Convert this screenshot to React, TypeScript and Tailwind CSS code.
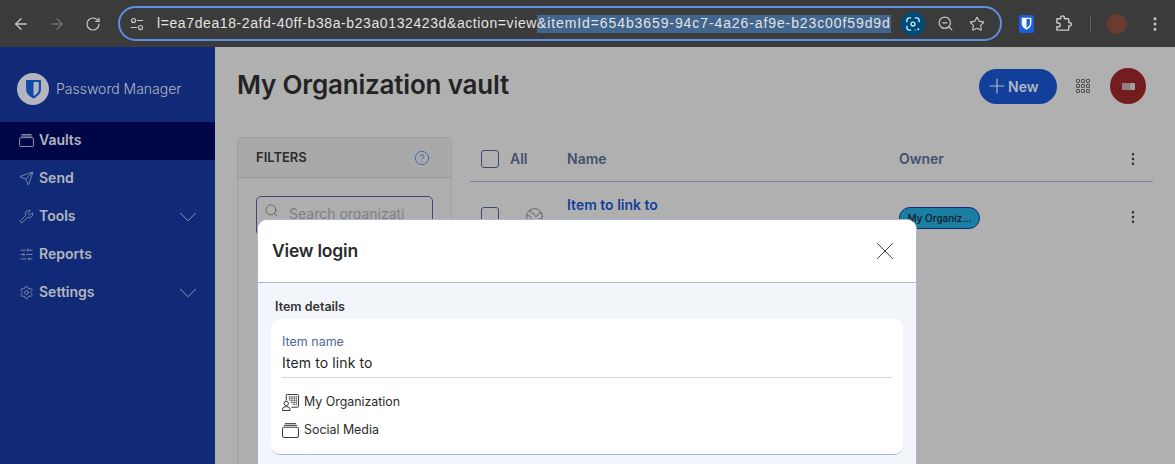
import React from "react";
import { ArrowLeft, ArrowRight, RotateCw, Search, Star, MoreVertical, Send, Wrench, SlidersHorizontal, Settings, ChevronDown, Plus, X, CircleHelp, Earth, ZoomOut } from "lucide-react";

const font = { fontFamily: "Inter, sans-serif" };

function Cards({ className = "" }: { className?: string }) {
  return (
    <svg viewBox="0 0 18 16" className={className} fill="none" stroke="currentColor" strokeWidth="1">
      <rect x="0.5" y="4.5" width="17" height="11" rx="1.5" />
      <path d="M2 2.5h14M3 0.7h12" />
    </svg>
  );
}

function Org({ className = "" }: { className?: string }) {
  return (
    <svg viewBox="0 0 18 18" className={className} fill="none" stroke="currentColor" strokeWidth="1">
      <path d="M4.5 7V1.500a1 1 0 0 1 1-1h11a1 1 0 0 1 1 1V13a1 1 0 0 1-1 1H10" />
      <path d="M7 3h9M7 5h9M8 7h8M9 9h7M11 11h5M8 2v5M10.500 2v8M13 2v10M15.500 2v10" strokeWidth="0.5" />
      <circle cx="4.500" cy="10" r="2.300" />
      <path d="M0.500 17.500v-1.500a3 3 0 0 1 3-2.500h2a3 3 0 0 1 3 2.500v1.500z" />
    </svg>
  );
}

function Shield({ className = "", fill = "currentColor", inner }: { className?: string; fill?: string; inner: string }) {
  return (
    <svg viewBox="0 0 16 18" className={className}>
      <path fill={fill} d="M1 0.500h14v9c0 3.800-3.300 6.500-7 8.500-3.700-2-7-4.700-7-8.500z" />
      <path fill={inner} d="M8 2.500h5v7c0 2.600-2.400 4.600-5 6z" />
    </svg>
  );
}

function Tune({ className = "" }: { className?: string }) {
  return (
    <svg viewBox="0 0 16 16" className={className} fill="none" stroke="currentColor" strokeWidth="1.4">
      <circle cx="4" cy="4" r="2.300" />
      <path d="M8 4h7M1 12h7" />
      <circle cx="12" cy="12" r="2.300" />
    </svg>
  );
}

function Lens({ className = "" }: { className?: string }) {
  return (
    <svg viewBox="0 0 16 16" className={className} fill="none" stroke="#c2e7ff" strokeWidth="1.600">
      <path d="M1 6V4a3 3 0 0 1 3-3h2M10 1h2a3 3 0 0 1 3 3v2M15 10v0M6 15H4a3 3 0 0 1-3-3v-2M10 15h1" />
      <circle cx="8" cy="8" r="2.200" />
      <circle cx="14" cy="14" r="1.200" fill="#c2e7ff" stroke="none" />
    </svg>
  );
}

function Ext({ className = "" }: { className?: string }) {
  return (
    <svg viewBox="0 0 18 18" className={className} fill="none" stroke="currentColor" strokeWidth="1.500" strokeLinejoin="round">
      <path d="M2 4h4V3a2 2 0 0 1 4 0v1h4.500v4H15.500a1.800 1.800 0 0 1 0 3.600H14.500V16H2v-3.500h1.500a2 2 0 0 0 0-4H2z" />
    </svg>
  );
}

function NavItem({ icon, label, active, chevron }: { icon: React.ReactNode; label: string; active?: boolean; chevron?: boolean }) {
  return (
    <div className={`flex h-[38px] items-center pl-[19px] pr-[12px] text-[#b3b6bf] ${active ? "bg-[#000647]" : ""}`}>
      <span className="flex w-[20px] justify-start pb-[2px]">{icon}</span>
      <span className="pb-[3px] text-[14px] font-semibold">{label}</span>
      {chevron && <ChevronDown className="ml-auto h-[30px] w-[30px] text-[#8d96b5]" strokeWidth={0.8} />}
    </div>
  );
}

export default function App() {
  return (
    <div className="flex h-[464px] w-[1175px] flex-col overflow-hidden bg-[#b0b0b0]" style={font}>
      <header className="flex h-[47px] shrink-0 items-center bg-[#3b3b3b] text-[#c7c7c7]">
        <div className="flex w-[118px] items-center">
          <ArrowLeft className="ml-[12px] h-[18px] w-[18px]" strokeWidth={1.7} />
          <ArrowRight className="ml-[18px] h-[18px] w-[18px] text-[#6f6f6f]" strokeWidth={1.7} />
          <RotateCw className="ml-[19px] h-[16px] w-[16px]" strokeWidth={1.8} />
        </div>
        <div className="flex h-[35px] w-[884px] items-center rounded-full border-2 border-[#5b90e3] pl-[10px] pr-[14px]">
          <Tune className="h-[14px] w-[14px]" />
          <div className="ml-[13px] flex h-[18px] items-center whitespace-nowrap text-[14px] text-[#e3e3e3]" style={{ fontFamily: '"Liberation Sans", sans-serif' }}>
            <span className="tracking-[0.6px]">l=ea7dea18-2afd-40ff-b38a-b23a0132423d&amp;action=view</span>
            <span className="flex h-[18px] items-center bg-[#41658c] tracking-[0.9px]">&amp;itemId=654b3659-94c7-4a26-af9e-b23c00f59d9d</span>
          </div>
          <div className="ml-[10px] flex h-[24px] w-[24px] shrink-0 items-center justify-center rounded-full bg-[#004a77]">
            <Lens className="h-[14px] w-[14px]" />
          </div>
          <ZoomOut className="ml-[12px] h-[17px] w-[17px] shrink-0" strokeWidth={1.7} />
          <Star className="ml-[15px] h-[16px] w-[16px] shrink-0" strokeWidth={1.7} />
        </div>
        <div className="ml-[17px] flex h-[18px] w-[15px] items-center justify-center rounded-[2px] bg-[#1a5fd9]">
          <Shield className="h-[13px] w-[11px]" fill="#ffffff" inner="#1a5fd9" />
        </div>
        <Ext className="ml-[21px] h-[17px] w-[17px]" />
        <div className="ml-[18px] h-[16px] w-px bg-[#5f5f5f]" />
        <div className="ml-[16px] h-[20px] w-[20px] rounded-full bg-[#6b3a30]" />
        <MoreVertical className="ml-[19px] h-[18px] w-[18px]" strokeWidth={2} />
      </header>

      <div className="relative flex min-h-0 flex-1">
        <aside className="w-[215px] shrink-0 bg-[#112a78]">
          <div className="flex h-[75px] items-center pl-[17px] pt-[8px] text-[#b3b6bf]">
            <div className="flex h-[32px] w-[32px] items-center justify-center rounded-full bg-[#b3b6bf]">
              <Shield className="h-[20px] w-[17px]" fill="#1149a8" inner="#b3b6bf" />
            </div>
            <span className="ml-[7px] text-[14px] font-light">Password Manager</span>
          </div>
          <NavItem active label="Vaults" icon={<Cards className="h-[13px] w-[15px]" />} />
          <NavItem label="Send" icon={<Send className="h-[15px] w-[15px]" strokeWidth={1} />} />
          <NavItem chevron label="Tools" icon={<Wrench className="h-[15px] w-[15px]" strokeWidth={1} />} />
          <NavItem label="Reports" icon={<SlidersHorizontal className="h-[15px] w-[15px]" strokeWidth={1} />} />
          <NavItem chevron label="Settings" icon={<Settings className="h-[15px] w-[15px]" strokeWidth={1} />} />
        </aside>

        <main className="min-w-0 flex-1 pl-[22px] pr-[22px]">
          <div className="flex h-[78px] items-center">
            <h1 className="mb-[3px] text-[26px] font-semibold tracking-[-0.18px] text-[#232323]">My Organization vault</h1>
            <button className="ml-auto flex h-[35px] w-[78px] items-center rounded-full bg-[#113f99] pl-[6px] text-[14px] font-semibold text-[#b3b6bf]">
              <Plus className="mr-[-1px] h-[24px] w-[24px]" strokeWidth={1.2} />New
            </button>
            <div className="ml-[19px] grid h-[14px] w-[14px] grid-cols-3 gap-[1px]">
              {Array.from({ length: 9 }).map((_, i) => (
                <span key={i} className="rounded-[1px] border border-[#4d4d4d]" />
              ))}
            </div>
            <div className="ml-[20px] mr-[7px] flex h-[36px] w-[36px] items-center justify-center rounded-full bg-[#751c1f]">
              <span className="h-[7px] w-[8px] bg-[#8f8080]" />
              <span className="h-[7px] w-[5px] bg-[#a59b9b]" />
            </div>
          </div>

          <div className="mt-[12px] flex items-start">
            <section className="h-[340px] w-[215px] shrink-0 rounded-t-[4px] border border-[#a1a1a1] bg-[#aeaeae]">
              <div className="flex h-[40px] items-center border-b border-[#979797] bg-[#a9a9a9] pl-[18px] pr-[7px] text-[13px] font-semibold text-[#2c2c2c]">
                FILTERS
                <CircleHelp className="ml-auto mr-[14px] h-[16px] w-[16px] text-[#2a5dbb]" strokeWidth={1.2} />
              </div>
              <div className="px-[18px] pt-[18px]">
                <div className="flex h-[40px] items-start rounded-[5px] border border-[#3c4a74] pl-[7px] pt-[6px] text-[14px] text-[#808080]">
                  <Search className="h-[15px] w-[15px] shrink-0 text-[#4a4a4a]" strokeWidth={1.1} />
                  <span className="ml-[10px] overflow-hidden whitespace-nowrap">Search organizati</span>
                </div>
              </div>
            </section>

            <section className="ml-[18px] min-w-0 flex-1">
              <div className="flex h-[45px] items-center border-b border-[#7a85a6] text-[14px] font-semibold text-[#45506f]">
                <span className="ml-[11px] h-[18px] w-[18px] rounded-[3px] border border-[#3f4b70]" />
                <span className="ml-[11px] w-[50px] pb-[2px]">All</span>
                <span className="ml-[7px] w-[332px] pb-[2px]">Name</span>
                <span className="pb-[2px]">Owner</span>
                <MoreVertical className="ml-auto mr-[12px] h-[16px] w-[16px] text-[#2b2b2b]" strokeWidth={1.7} />
              </div>
              <div className="flex h-[66px] items-start pt-[12px]">
                <span className="ml-[11px] mt-[13px] h-[18px] w-[18px] rounded-[3px] border border-[#3f4b70]" />
                <Earth className="ml-[26px] mt-[13px] h-[19px] w-[19px] text-[#505050]" strokeWidth={0.9} />
                <span className="ml-[23px] w-[332px] text-[14px] font-semibold text-[#113f99]">Item to link to</span>
                <span className="mt-[13px] flex h-[22px] w-[81px] items-center justify-center rounded-full border border-[#112a78] bg-[#1a7fa3] text-[10px] font-medium text-[#111827]">My Organiz...</span>
                <MoreVertical className="ml-auto mr-[12px] mt-[15px] h-[16px] w-[16px] text-[#2b2b2b]" strokeWidth={1.7} />
              </div>
            </section>
          </div>
        </main>

        <div className="absolute left-[257px] top-[172px] h-[300px] w-[660px] overflow-hidden rounded-t-[10px] border border-[#a9b7d0] bg-[#f2f5f9]">
          <div className="flex h-[63px] items-center border-b border-[#a9b7d0] bg-white pl-[14px] pr-[16px]">
            <h2 className="text-[17.5px] font-semibold tracking-[-0.2px] text-[#2b2b2b]">View login</h2>
            <X className="ml-auto h-[30px] w-[30px] text-[#333333]" strokeWidth={0.75} />
          </div>
          <div className="px-[13px] pt-[16px]">
            <div className="pl-[4px] text-[12.5px] font-semibold leading-[16px] text-[#333333]">Item details</div>
            <div className="mt-[4px] h-[136px] rounded-[9px] border-b border-[#a9b7d0] bg-white px-[11px] pt-[15px]">
              <div className="text-[12.5px] leading-[16px] text-[#4d6a99]">Item name</div>
              <div className="mt-[3px] h-[25px] border-b border-[#d3d7e0] text-[14px] leading-[20px] tracking-[0.1px] text-[#1f1f1f]">Item to link to</div>
              <div className="mt-[15px] flex h-[18px] items-center text-[12.4px] text-[#2b2b2b]">
                <Org className="h-[17px] w-[17px]" />
                <span className="ml-[5px]">My Organization</span>
              </div>
              <div className="mt-[10px] flex h-[18px] items-center text-[12.4px] text-[#2b2b2b]">
                <Cards className="h-[15px] w-[17px]" />
                <span className="ml-[5px]">Social Media</span>
              </div>
            </div>
          </div>
        </div>
      </div>
    </div>
  );
}
